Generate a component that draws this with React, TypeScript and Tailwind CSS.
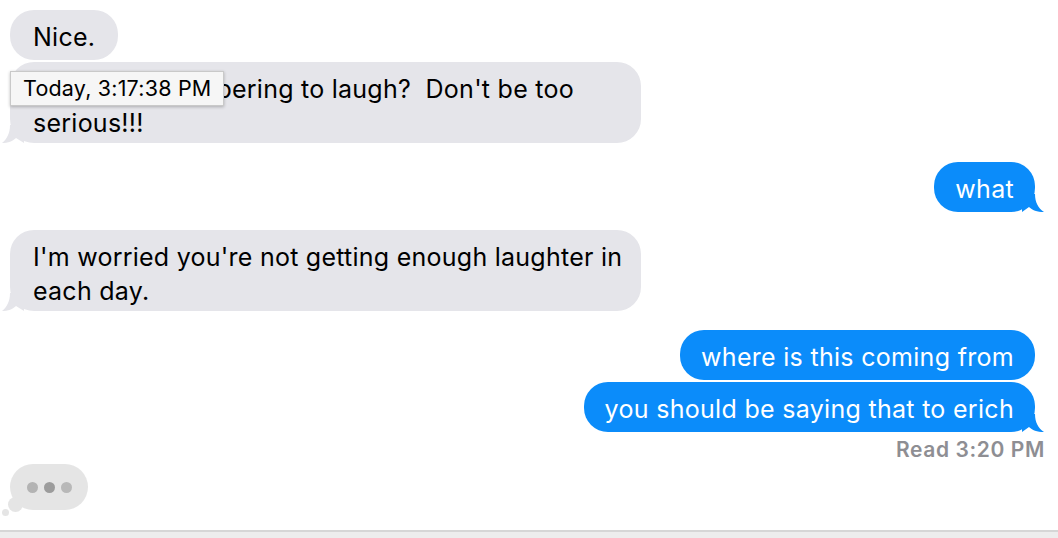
const font = { fontFamily: "Inter, 'Noto Sans', sans-serif" };

const LeftTail = ({ color }: { color: string }) => (
  <svg
    className="absolute bottom-0 -left-[8px]"
    width="22"
    height="18"
    viewBox="0 0 22 18"
  >
    <path d="M8 0 C8 8 5 14 0 18 C6 18 11 16 14 13 L22 18 L22 0 Z" fill={color} />
  </svg>
);

const RightTail = ({ color }: { color: string }) => (
  <svg
    className="absolute bottom-0 -right-[9px]"
    width="22"
    height="18"
    viewBox="0 0 22 18"
  >
    <path d="M13 0 C13 8 16 14 22 18 C15 18 10 16 7 13 L0 18 L0 0 Z" fill={color} />
  </svg>
);

const Received = ({
  text,
  tail = false,
  wide = false,
  children,
}: {
  text: string;
  tail?: boolean;
  wide?: boolean;
  children?: React.ReactNode;
}) => (
  <div className="flex justify-start">
    <div
      className={`relative rounded-[24px] bg-[#e5e5ea] text-[25px] leading-[34px] tracking-[0.25px] text-black whitespace-pre-wrap ${
        wide ? "w-[631px] pl-[23px] pr-[10px] pt-[10px] pb-[3px]" : "px-[23px] pt-[10px] pb-[6px]"
      }`}
    >
      {text}
      {tail && <LeftTail color="#e5e5ea" />}
      {children}
    </div>
  </div>
);

const Sent = ({ text, tail = false }: { text: string; tail?: boolean }) => (
  <div className="flex justify-end pr-[23px]">
    <div className="relative rounded-[24px] bg-[#0b8cfa] px-[21px] pt-[10px] pb-[6px] text-[25px] leading-[34px] tracking-[0.3px] text-white">
      {text}
      {tail && <RightTail color="#0b8cfa" />}
    </div>
  </div>
);

export default function App() {
  return (
    <div className="flex h-[538px] w-[1058px] flex-col bg-white" style={font}>
      <div className="flex flex-1 flex-col pl-[10px] pt-[10px]">
        <Received text="Nice." />
        <div className="mt-[2px]">
          <Received
            wide
            tail
            text={"Are you remembering to laugh?  Don't be too serious!!!"}
          >
            <div className="absolute left-0 top-[9px] border border-[#c9c9c9] bg-[#f6f6f6] px-[12px] py-[4px] text-[21.5px] leading-[25px] tracking-[0.2px] text-black shadow-[0_1px_3px_rgba(0,0,0,0.25)] whitespace-nowrap">
              Today, 3:17:38 PM
            </div>
          </Received>
        </div>
        <div className="mt-[19px]">
          <Sent text="what" tail />
        </div>
        <div className="mt-[18px]">
          <Received
            wide
            tail
            text="I'm worried you're not getting enough laughter in each day."
          />
        </div>
        <div className="mt-[19px]">
          <Sent text="where is this coming from" />
        </div>
        <div className="mt-[2px]">
          <Sent text="you should be saying that to erich" tail />
        </div>
        <div className="mt-[6px] pr-[13px] text-right text-[21px] font-semibold leading-[24px] tracking-[0.6px] text-[#8e8e93]">
          Read 3:20 PM
        </div>
        <div className="mt-[2px] flex">
          <div className="relative flex h-[46px] w-[78px] items-center justify-center gap-[6px] rounded-full bg-[#e5e5e5]">
            <span className="h-[11px] w-[11px] rounded-full bg-[#b3b3b3]" />
            <span className="h-[11px] w-[11px] rounded-full bg-[#9c9c9c]" />
            <span className="h-[11px] w-[11px] rounded-full bg-[#b8b8b8]" />
            <span className="absolute -bottom-[2px] -left-[2px] h-[15px] w-[15px] rounded-full bg-[#e5e5e5]" />
            <span className="absolute -bottom-[6px] -left-[8px] h-[7px] w-[7px] rounded-full bg-[#e5e5e5]" />
          </div>
        </div>
      </div>
      <div className="h-[8px] border-t-2 border-[#d6d6d6] bg-[#ededed]" />
    </div>
  );
}
